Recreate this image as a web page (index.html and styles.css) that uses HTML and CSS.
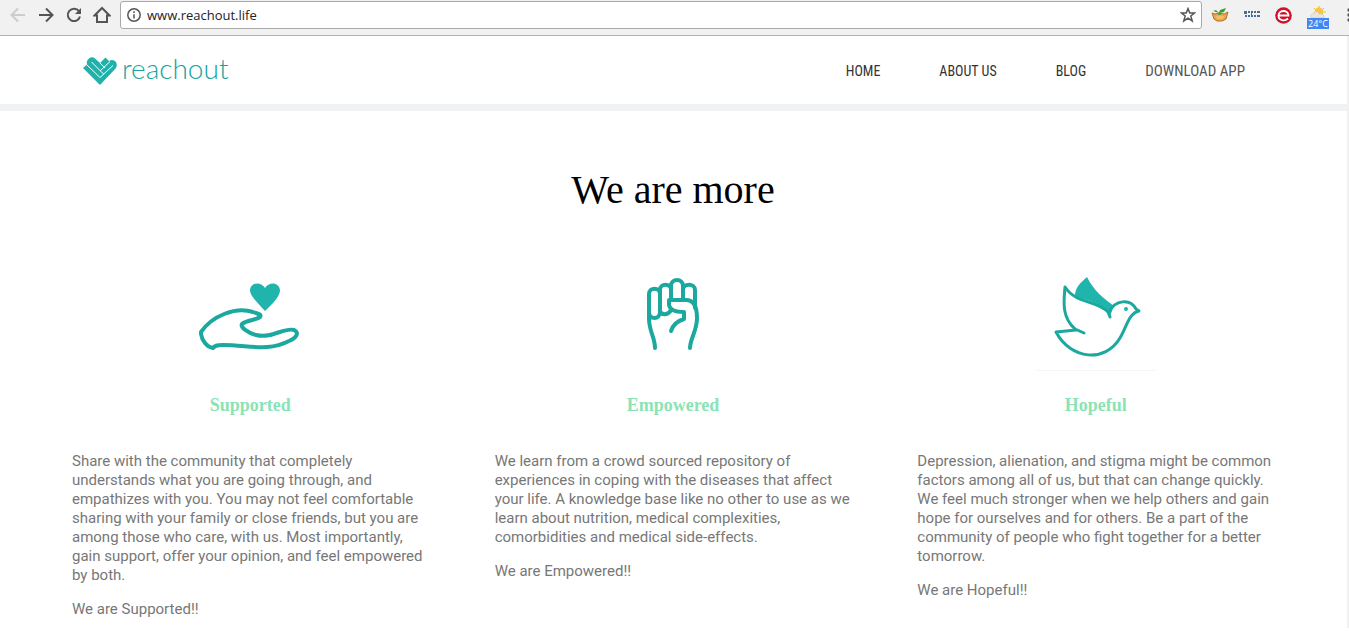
FILE: index.html
```html
<!DOCTYPE html>
<html lang="en">
<head>
<meta charset="utf-8" />
<title>reachout</title>
<link rel="stylesheet" href="styles.css">
</head>
<body>

<div class="toolbar">
	<button class="tool-btn back" type="button" aria-label="Back">
		<svg width="16" height="16" viewBox="0 0 16 16"><path d="M15 8H2M8 1.5L1.5 8L8 14.5" /></svg>
	</button>
	<button class="tool-btn" type="button" aria-label="Forward">
		<svg width="16" height="16" viewBox="0 0 16 16"><path d="M1 8H14M8 1.5L14.5 8L8 14.5" /></svg>
	</button>
	<button class="tool-btn" type="button" aria-label="Reload">
		<svg width="16" height="16" viewBox="0 0 16 16"><path d="M13 4.2A6.2 6.2 0 1 0 14 9.5" /><path class="solid" d="M15 1V7H9Z" /></svg>
	</button>
	<button class="tool-btn" type="button" aria-label="Home page">
		<svg width="18" height="18" viewBox="0 0 18 18"><path d="M1.5 9.5L9 2L16.5 9.5H14V16H4V9.5Z" /></svg>
	</button>
	<div class="address">
		<svg class="info" width="14" height="14" viewBox="0 0 14 14"><circle cx="7" cy="7" r="6.2" /><path d="M7 6.2V10.5M7 3.3V5" /></svg>
		<input class="url" type="text" aria-label="Address" value="www.reachout.life">
		<svg class="star" width="16" height="16" viewBox="0 0 16 16"><path d="M8 1.6L9.8 6H14.6L10.8 9L12.2 13.9L8 11.1L3.8 13.9L5.2 9L1.4 6H6.2Z" /></svg>
	</div>
	<div class="extensions">
		<svg width="18" height="16" viewBox="0 0 18 16">
			<path fill="#e9a34e" stroke="#b87028" d="M1 6L4 7L8 6L13 7L17 5L15 12L11 14H6L3 12Z" />
			<path fill="#f3bd68" d="M4 9L8 8.4L13 9L12 12L7 12.500Z" />
			<path fill="#3f9c35" d="M7 8L9 3L15 1L13 5L9 6L10 8ZM2 4L5 3L8 6Z" />
		</svg>
		<svg width="16" height="16" viewBox="0 0 16 16" fill="#4a6c9c">
			<path d="M0 4H3V7H0ZM4 4H6V6H4ZM7 4H9V6H7ZM10 4H12V6H10ZM13 4H16V6H13ZM1 8H3V10H1ZM4 8H6V10H4ZM7 8H9V10H7ZM10 8H12V10H10ZM13 8H16V10H13ZM7 6H8V8H7Z" />
		</svg>
		<svg width="17" height="17" viewBox="0 0 17 17">
			<circle cx="8.500" cy="8.500" r="8.300" fill="#d0112b" />
			<path fill="none" stroke="#fff" stroke-width="1.800" d="M3.500 8.500H13.500C13.500 2.500 3.500 2.500 3.500 8.500C3.500 14 10 14.500 13 11.500" />
		</svg>
		<div class="weather">
			<svg width="16" height="12" viewBox="0 0 16 12">
				<circle cx="9" cy="6" r="4.500" fill="#f9c644" />
				<path fill="none" stroke="#f5b53a" d="M9 0V2M4 2L5.500 3.500M14 2L12.500 3.500M16 6H14" />
				<path fill="#e9e5da" stroke="#cdb98d" stroke-width=".5" d="M2 12C0 10 1 7 4 7.500C5 4.500 9 5 9 8C12 7 14 9 14 12Z" />
			</svg>
			<span class="degrees">24°C</span>
		</div>
		<svg class="menu" width="4" height="16" viewBox="0 0 4 16" fill="#555"><circle cx="2" cy="3" r="1.700" /><circle cx="2" cy="8" r="1.700" /><circle cx="2" cy="13" r="1.700" /></svg>
	</div>
</div>

<div class="page">
	<header class="header">
		<a class="logo" href="#">
			<svg width="36" height="30" viewBox="0 0 36 30">
				<path fill="#20b2aa" d="M1 12L5 8.500Q4 5 7 2.500Q10 0 13 2.500L18 7L23.500 1.500L27 5Q30 3 33 5Q36 8 34 12L18 29Z" />
				<path fill="none" stroke="#fff" d="M4.500 8.500L18 21.500L31 9.500M9.500 6L21.500 18M18 7L23 12M18 15L28 5.500" />
			</svg>
			<span class="logo-name">reachout</span>
		</a>
		<nav class="nav">
			<a href="#">HOME</a>
			<a href="#">ABOUT US</a>
			<a href="#">BLOG</a>
			<a class="download" href="#">DOWNLOAD APP</a>
		</nav>
	</header>

	<main class="main">
		<h1>We are more</h1>
		<div class="columns">
			<section class="column">
				<svg class="icon" width="120" height="120" viewBox="0 0 120 120">
					<path d="M11 62C22 46 46 36 63 42C68 44 72 44 70 47C67 50 56 50 52 54C50 57 58 63 66 65C82 69 94 57 104 60C110 63 106 68 99 71C78 82 59 75 33 75C26 75 25 76 23 78C17 77 12 71 11 64Z" />
					<path class="fill" d="M75 41C68 33 61 27 60 21C60 12 71 11 75 18C79 11 90 12 90 21C89 28 82 34 75 41Z" />
				</svg>
				<h2>Supported</h2>
				<p>Share with the community that completely understands what you are going through, and empathizes with you. You may not feel comfortable sharing with your family or close friends, but you are among those who care, with us. Most importantly, gain support, offer your opinion, and feel empowered by both.</p>
				<p>We are Supported!!</p>
			</section>
			<section class="column">
				<svg class="icon" width="120" height="120" viewBox="0 0 120 120">
					<path d="M42 78C42 67 36 62 36 48V24C36 17 47 17 47 24V42C47 50 36 50 36 42M47 24V20C47 13 58 13 58 20V30M47 42C51 46 56 44 58 40M58 20V16C58 8 70 8 70 16V30M70 20C70 13 82 13 82 20V38M77 78C77 69 84 61 84 48C84 40 82 30 73 30H56V35C57 41 64 42 71 42V49C64 51 60 55 58 61" />
				</svg>
				<h2>Empowered</h2>
				<p>We learn from a crowd sourced repository of experiences in coping with the diseases that affect your life. A knowledge base like no other to use as we learn about nutrition, medical complexities, comorbidities and medical side-effects.</p>
				<p>We are Empowered!!</p>
			</section>
			<section class="column">
				<svg class="icon" width="120" height="120" viewBox="0 0 120 120">
					<g transform="translate(2 0)">
						<path class="fill" d="M49 7C56 21 65 28 76 36L72 46C65 33 51 31 37 26C37 18 42 13 49 7Z" />
						<path class="bird" d="M46 63L37 59C23 47 26 30 27 17C38 34 59 30 70 42L72 47M71 42C77 30 92 28 98 39L101 41C91 43 89 56 82 68C67 93 33 90 18 62L38 60" />
						<circle class="fill" cx="88" cy="39" r="2" />
					</g>
					<path class="base" d="M0 100.500H120" />
				</svg>
				<h2>Hopeful</h2>
				<p>Depression, alienation, and stigma might be common factors among all of us, but that can change quickly. We feel much stronger when we help others and gain hope for ourselves and for others. Be a part of the community of people who fight together for a better tomorrow.</p>
				<p>We are Hopeful!!</p>
			</section>
		</div>
	</main>
</div>

</body>
</html>
```
FILE: styles.css
```css
body {
	margin: 0;
	background: #fff;
	font-family: Roboto, sans-serif;
}

/* browser bar */
.toolbar {
	display: flex;
	align-items: center;
	height: 35px;
	padding-left: 4px;
	background: #f1f1f1;
	border-bottom: 1px solid #b3b3b3;
	overflow: hidden;
}
.tool-btn {
	display: flex;
	align-items: center;
	justify-content: center;
	width: 28px;
	height: 28px;
	margin-bottom: 5px;
	padding: 0;
	border: 0;
	background: none;
}
.tool-btn path {
	fill: none;
	stroke: #555;
	stroke-width: 2;
}
.tool-btn .solid {
	fill: #555;
	stroke: none;
}
.tool-btn.back path {
	stroke: #ccc;
}
.address {
	display: flex;
	flex: 1;
	align-items: center;
	gap: 6px;
	box-sizing: border-box;
	height: 28px;
	margin: 0 9px 6px 4px;
	padding: 0 5px 0 6px;
	background: #fff;
	border: 1px solid #a9a9a9;
	border-radius: 3px;
}
.info,
.star {
	fill: none;
	stroke: #555;
	stroke-width: 1.5;
}
.url {
	flex: 1;
	min-width: 0;
	padding: 0;
	border: 0;
	outline: 0;
	background: none;
	color: #222;
	font: 13px "Open Sans", sans-serif;
}
.extensions {
	display: flex;
	align-items: center;
	gap: 15px;
	height: 30px;
	margin-bottom: 5px;
}
.weather {
	display: flex;
	flex-direction: column;
	align-items: center;
	width: 22px;
	padding-top: 5px;
}
.degrees {
	width: 22px;
	background: #4285f4;
	color: #fff;
	font: 9px/11px "Open Sans", sans-serif;
	text-align: center;
}
.menu {
	margin: 0 -2px 0 3px;
}

/* site header */
.page {
	border-right: 2px solid #f1f1f1;
}
.header {
	display: flex;
	align-items: center;
	justify-content: space-between;
	height: 68px;
	padding: 0 102px 0 82px;
	border-bottom: 7px solid #f1f2f3;
}
.logo {
	display: flex;
	align-items: center;
	gap: 4px;
	padding-top: 2px;
	color: #12a59d;
	text-decoration: none;
}
.logo-name {
	padding-bottom: 6px;
	font: 300 28px/32px Lato, sans-serif;
}
.nav {
	display: flex;
	align-items: center;
	gap: 59px;
	padding-top: 2px;
}
.nav a {
	color: #333;
	font: 14px/20px "Roboto Condensed", Roboto, sans-serif;
	text-decoration: none;
}
.nav .download {
	color: #555;
	font-size: 15px;
}

/* content */
.main {
	padding: 56px 40px 9px 39px;
}
h1 {
	margin: 0 0 47px;
	font: 40px/46px "Liberation Serif", serif;
	text-align: center;
}
.columns {
	display: grid;
	grid-template-columns: repeat(3, 1fr);
}
.column {
	padding: 10px 33px 0;
}
.icon {
	display: block;
	margin: 0 auto;
	fill: none;
	stroke: #1ba89f;
	stroke-width: 4;
	stroke-linecap: round;
	stroke-linejoin: round;
}
.icon .fill {
	fill: #1fb5ac;
	stroke: none;
}
.icon .bird {
	stroke-width: 3;
}
.icon .base {
	stroke: #f5f5f5;
	stroke-width: 1;
}
h2 {
	margin: 5px 0 37px;
	color: #8be3b5;
	font: bold 18px/20px "Liberation Serif", serif;
	text-align: center;
}
p {
	margin: 0 0 15px;
	color: #777;
	font-size: 15px;
	line-height: 19px;
}
.column p:last-child {
	margin-bottom: 0;
}
```
